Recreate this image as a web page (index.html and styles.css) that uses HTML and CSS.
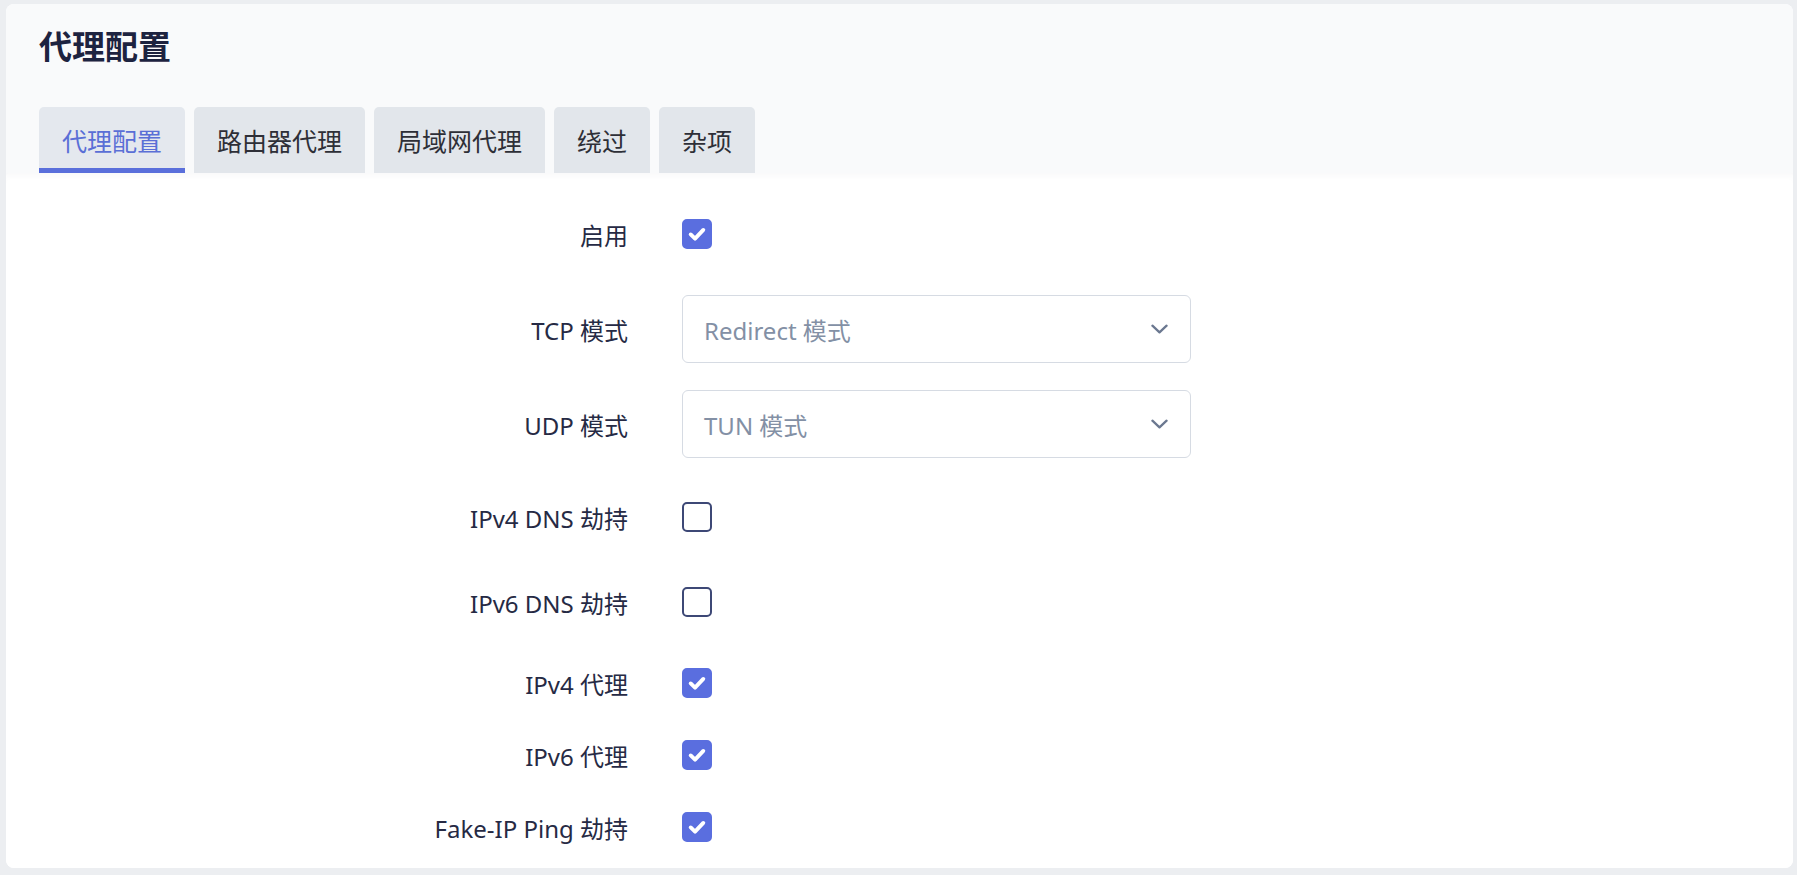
FILE: index.html
```html
<!DOCTYPE html>
<html lang="zh-CN">
<head>
<meta charset="utf-8">
<title>代理配置</title>
<link rel="stylesheet" href="styles.css">
</head>
<body>
<div class="card">
  <div class="card-head">
    <h2 class="title">代理配置</h2>
    <ul class="tabs">
      <li class="tab active">代理配置</li>
      <li class="tab">路由器代理</li>
      <li class="tab">局域网代理</li>
      <li class="tab">绕过</li>
      <li class="tab">杂项</li>
    </ul>
  </div>
  <div class="card-body">
    <div class="row">
      <label class="label">启用</label>
      <div class="control"><span class="cbox checked"><svg viewBox="0 0 16 16"><path d="M3.8 8.3l2.9 2.8L12.2 5.3"/></svg></span></div>
    </div>
    <div class="row gap-l">
      <label class="label">TCP 模式</label>
      <div class="control"><div class="select"><span>Redirect 模式</span><svg class="chev" viewBox="0 0 18 10"><path d="M1.5 1.5L9 8.5l7.5-7"/></svg></div></div>
    </div>
    <div class="row gap-l">
      <label class="label">UDP 模式</label>
      <div class="control"><div class="select"><span>TUN 模式</span><svg class="chev" viewBox="0 0 18 10"><path d="M1.5 1.5L9 8.5l7.5-7"/></svg></div></div>
    </div>
    <div class="row gap-m">
      <label class="label">IPv4 DNS 劫持</label>
      <div class="control"><span class="cbox"></span></div>
    </div>
    <div class="row gap-s">
      <label class="label">IPv6 DNS 劫持</label>
      <div class="control"><span class="cbox"></span></div>
    </div>
    <div class="row gap-xs">
      <label class="label">IPv4 代理</label>
      <div class="control"><span class="cbox checked"><svg viewBox="0 0 16 16"><path d="M3.8 8.3l2.9 2.8L12.2 5.3"/></svg></span></div>
    </div>
    <div class="row gap-xxs">
      <label class="label">IPv6 代理</label>
      <div class="control"><span class="cbox checked"><svg viewBox="0 0 16 16"><path d="M3.8 8.3l2.9 2.8L12.2 5.3"/></svg></span></div>
    </div>
    <div class="row gap-xxs">
      <label class="label">Fake-IP Ping 劫持</label>
      <div class="control"><span class="cbox checked"><svg viewBox="0 0 16 16"><path d="M3.8 8.3l2.9 2.8L12.2 5.3"/></svg></span></div>
    </div>
  </div>
</div>
</body>
</html>
```
FILE: styles.css
```css
* { box-sizing: border-box; }
html, body { height: 100%; }
body {
  margin: 0;
  padding: 4px 4px 7px 6px;
  background: #eceef1;
  font-family: "Noto Sans", "Noto Sans CJK SC", sans-serif;
  color: #262a44;
  overflow: hidden;
}
.card {
  height: 864px;
  background: #fff;
  border-radius: 8px;
  overflow: hidden;
  display: flex;
  flex-direction: column;
}
.card-head {
  background: #f9fafb;
  padding: 23px 33px 0;
}
.title {
  margin: 0;
  font-size: 33px;
  line-height: 40px;
  font-weight: 700;
  color: #1d2340;
}
.tabs {
  list-style: none;
  margin: 40px 0 0;
  padding: 0;
  display: flex;
  gap: 9px;
}
.tab {
  height: 66px;
  padding: 4px 23px 0;
  display: flex;
  align-items: center;
  font-size: 25px;
  color: #2e2f37;
  background: #e2e6eb;
  border-radius: 5px 5px 0 0;
  border-bottom: 5px solid transparent;
}
.tab.active {
  color: #5a6fd6;
  background: #e4e8ee;
  border-bottom-color: #5a6fdb;
}
.card-body {
  flex: 1;
  background: #fff;
  padding: 27px 33px 0;
  box-shadow: inset 0 6px 8px -6px rgba(60, 70, 90, 0.06);
}
.row {
  display: grid;
  grid-template-columns: 589px 1fr;
  column-gap: 54px;
  align-items: center;
  min-height: 68px;
}
.gap-l { margin-top: 27px; }
.gap-m { margin-top: 25px; }
.gap-s { margin-top: 17px; }
.gap-xs { margin-top: 13px; }
.gap-xxs { margin-top: 4px; }
.label {
  text-align: right;
  font-size: 24px;
  color: #262a44;
}
.control { display: flex; align-items: center; }
.cbox {
  width: 30px;
  height: 30px;
  border: 2px solid #3d4876;
  border-radius: 5px;
  background: #fff;
  display: flex;
  align-items: center;
  justify-content: center;
}
.cbox.checked {
  background: #5a6edf;
  border-color: #5a6edf;
}
.cbox svg {
  width: 24px;
  height: 24px;
  fill: none;
  stroke: #fff;
  stroke-width: 2.6;
  stroke-linecap: round;
  stroke-linejoin: round;
}
.select {
  width: 509px;
  height: 68px;
  border: 1.5px solid #d6dbe3;
  border-radius: 6px;
  display: flex;
  align-items: center;
  justify-content: space-between;
  padding: 0 22px 0 21px;
  font-size: 24px;
  color: #8390a5;
  background: #fff;
}
.chev {
  width: 17px;
  height: 10px;
  fill: none;
  stroke: #6b7890;
  stroke-width: 2.4;
  stroke-linecap: round;
  stroke-linejoin: round;
}
```
